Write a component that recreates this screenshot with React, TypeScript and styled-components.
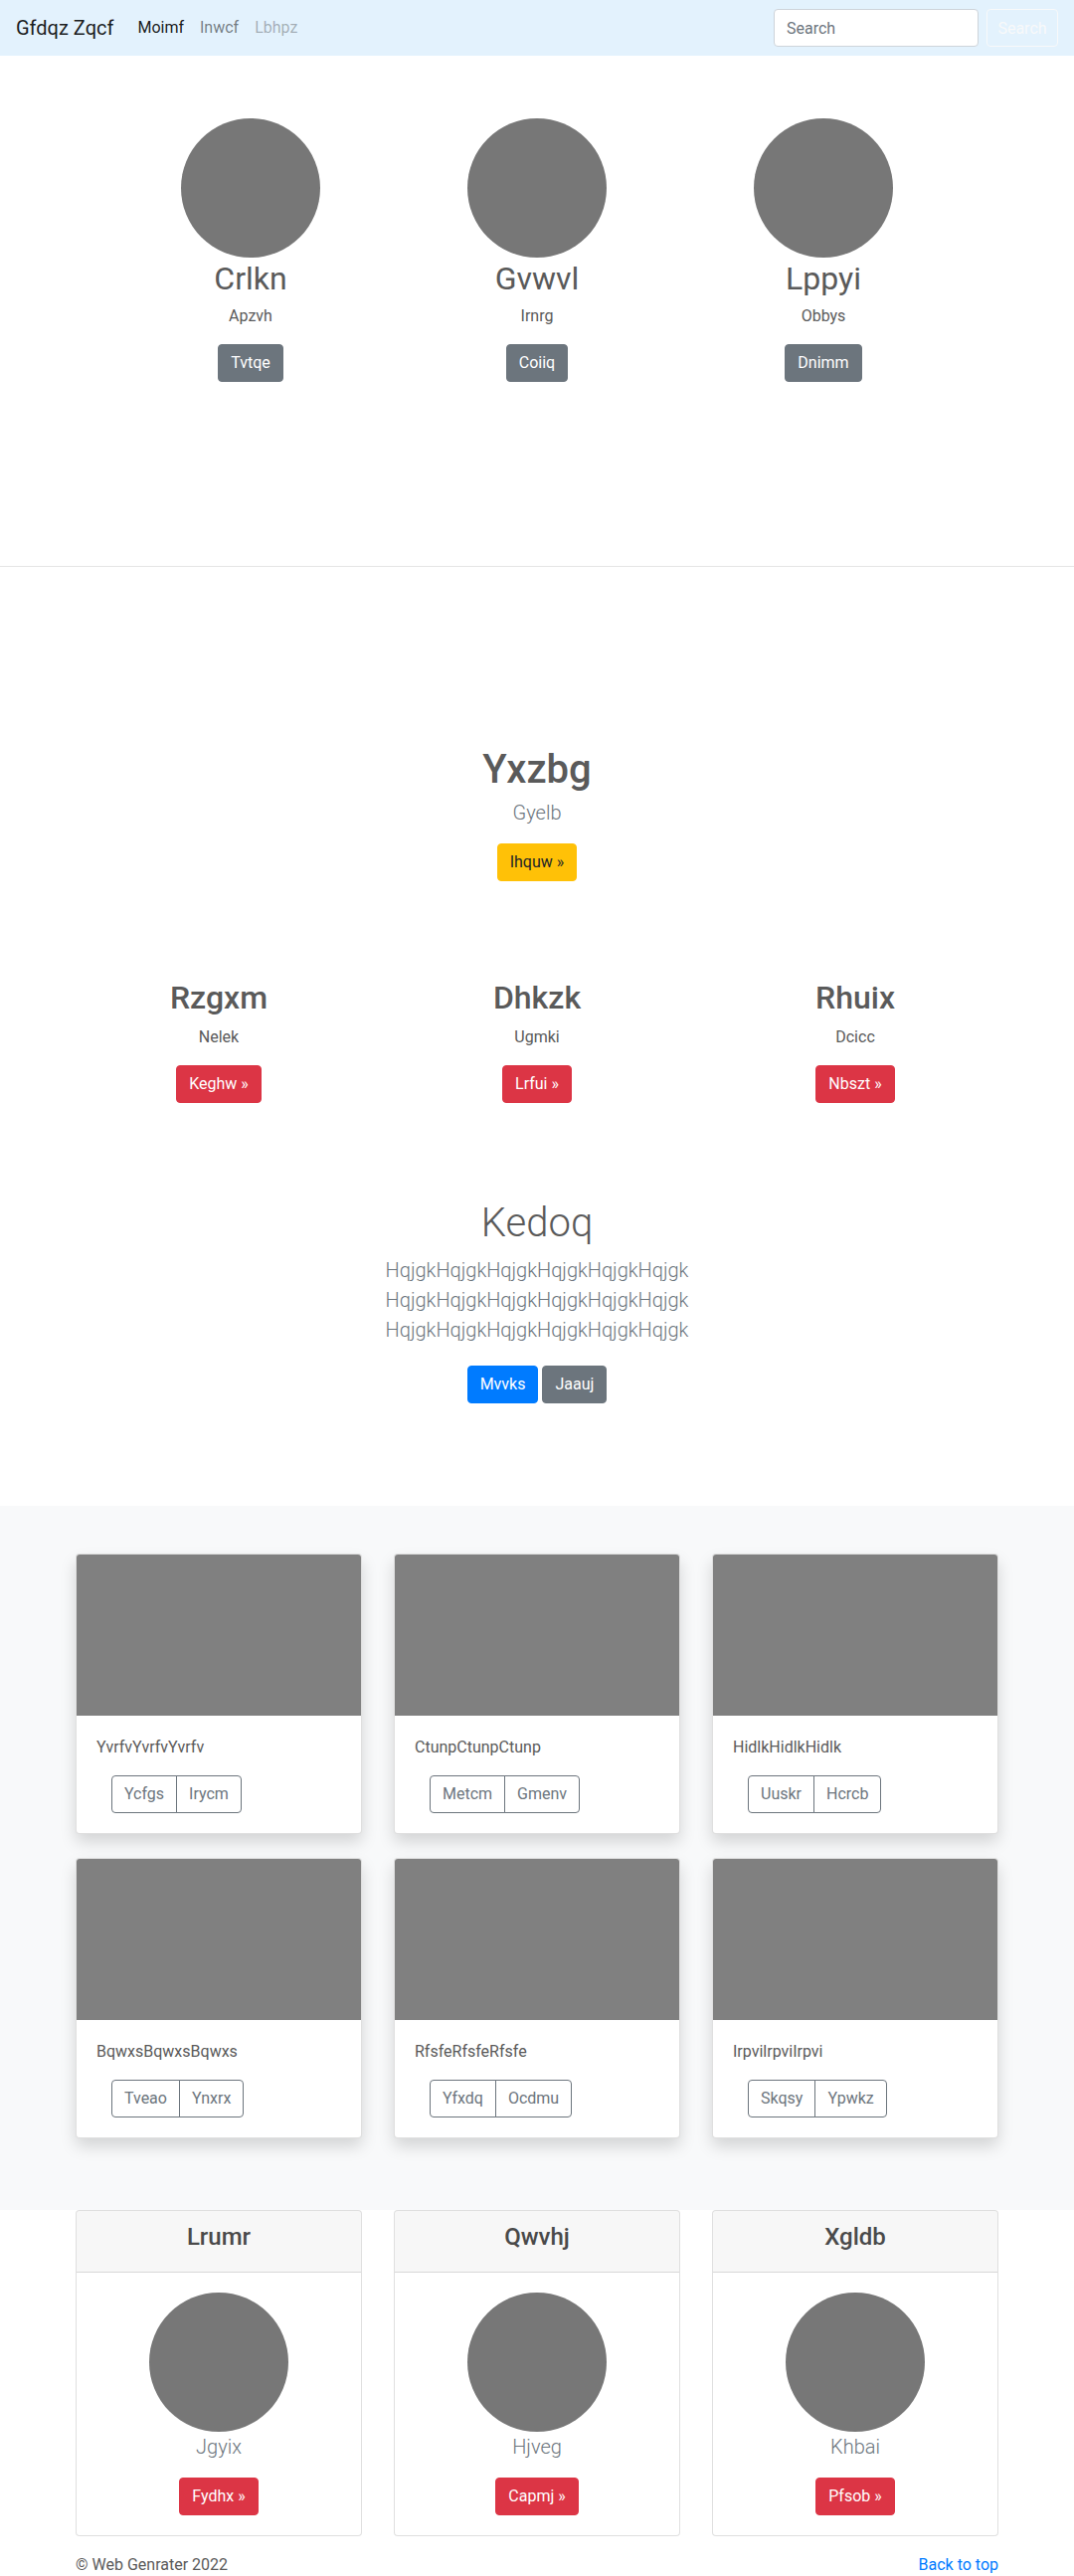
import React from 'react';
import styled, { createGlobalStyle, css } from 'styled-components';

const GlobalStyle = createGlobalStyle`
	* {
		box-sizing: border-box;
	}

	body {
		margin: 0;
		font-family: 'Segoe UI', Roboto, 'Liberation Sans', Arial, sans-serif;
		font-size: 16px;
		line-height: 1.5;
		color: #5a5a5a;
		background-color: #ffffff;
	}
`;

const NavBar = styled.nav`
	display: flex;
	align-items: center;
	height: 56px;
	padding: 8px 16px;
	background-color: #e3f2fd;
`;

const Brand = styled.a`
	font-size: 20px;
	line-height: 30px;
	color: rgba(0, 0, 0, 0.9);
	margin-right: 16px;
	text-decoration: none;
	white-space: nowrap;
`;

const NavList = styled.ul`
	display: flex;
	list-style: none;
	margin: 0;
	padding: 0;
`;

type LinkState = 'active' | 'normal' | 'disabled';

const linkColors: Record<LinkState, string> = {
	active: 'rgba(0, 0, 0, 0.9)',
	normal: 'rgba(0, 0, 0, 0.5)',
	disabled: 'rgba(0, 0, 0, 0.3)',
};

const NavLink = styled.a<{ $state: LinkState }>`
	display: block;
	padding: 8px;
	color: ${p => linkColors[p.$state]};
	text-decoration: none;
`;

const SearchForm = styled.form`
	display: flex;
	margin-left: auto;
	gap: 8px;
`;

const SearchInput = styled.input`
	width: 206px;
	height: 38px;
	padding: 6px 12px;
	font-family: inherit;
	font-size: 16px;
	color: #495057;
	background-color: #ffffff;
	border: 1px solid #ced4da;
	border-radius: 4px;
	outline: none;

	&::placeholder {
		color: #6c757d;
	}
`;

const SearchButton = styled.button`
	width: 72px;
	height: 38px;
	font-family: inherit;
	font-size: 16px;
	color: #f8f9fa;
	background: transparent;
	border: 1px solid #f8f9fa;
	border-radius: 4px;
`;

type Variant = 'primary' | 'secondary' | 'warning' | 'danger';

const variants: Record<Variant, { bg: string; fg: string }> = {
	primary: { bg: '#007bff', fg: '#ffffff' },
	secondary: { bg: '#6c757d', fg: '#ffffff' },
	warning: { bg: '#ffc107', fg: '#212529' },
	danger: { bg: '#dc3545', fg: '#ffffff' },
};

const Button = styled.a<{ $variant: Variant }>`
	display: inline-block;
	padding: 6px 12px;
	font-size: 16px;
	line-height: 24px;
	border-radius: 4px;
	text-decoration: none;
	border: 1px solid ${p => variants[p.$variant].bg};
	background-color: ${p => variants[p.$variant].bg};
	color: ${p => variants[p.$variant].fg};
`;

const Circle = styled.div`
	width: 140px;
	height: 140px;
	border-radius: 50%;
	background-color: #777777;
	margin: 0 auto;
`;

/* marketing row */

const Marketing = styled.section`
	padding: 63px 0 185px;
	border-bottom: 1px solid rgba(0, 0, 0, 0.1);
`;

const ThreeCols = styled.div<{ $width: number }>`
	display: grid;
	grid-template-columns: repeat(3, 1fr);
	width: ${p => p.$width}px;
	margin: 0 auto;
	text-align: center;
`;

const MarketName = styled.h2`
	font-size: 32px;
	font-weight: 400;
	line-height: 1.2;
	margin: 2px 0 7px;
`;

const Para = styled.p`
	margin: 0 0 16px;
`;

/* hero + featurettes */

const Hero = styled.section`
	padding: 180px 0 98px;
	text-align: center;
`;

const HeroTitle = styled.h1`
	font-size: 40px;
	font-weight: 500;
	line-height: 1.2;
	margin: 0 0 4px;
`;

const Lead = styled.p<{ $mb?: number }>`
	font-size: 20px;
	font-weight: 300;
	line-height: 30px;
	color: #6c757d;
	margin: 0 0 ${p => p.$mb ?? 16}px;
`;

const Features = styled.section`
	padding-bottom: 97px;
`;

const FeatureName = styled.h2`
	font-size: 32px;
	font-weight: 500;
	line-height: 1.2;
	margin: 0 0 8px;
`;

const Jumbo = styled.section`
	text-align: center;
	padding-bottom: 103px;
`;

const JumboTitle = styled.h1`
	font-size: 40px;
	font-weight: 300;
	line-height: 1.2;
	margin: 0 0 8px;
`;

const LeadLine = styled.span`
	display: block;
`;

const ButtonRow = styled.div`
	display: flex;
	justify-content: center;
	gap: 4px;
`;

/* album */

const Album = styled.section`
	background-color: #f8f9fa;
	padding: 48px 0 72px;
`;

const Container = styled.div`
	width: 960px;
	margin: 0 auto;
	padding: 0 16px;
`;

const CardGrid = styled.div`
	display: grid;
	grid-template-columns: repeat(3, 288px);
	column-gap: 32px;
	row-gap: 24px;
`;

const Card = styled.div<{ $shadow?: boolean }>`
	background-color: #ffffff;
	border: 1px solid rgba(0, 0, 0, 0.125);
	border-radius: 4px;
	overflow: hidden;
	${p => p.$shadow && css`
		box-shadow: 0 8px 16px rgba(0, 0, 0, 0.15);
	`}
`;

const CardImage = styled.div`
	height: 162px;
	background-color: #808080;
`;

const CardBody = styled.div<{ $center?: boolean }>`
	padding: 20px;
	text-align: ${p => (p.$center ? 'center' : 'left')};
`;

const BtnGroup = styled.div`
	display: inline-flex;
	margin-left: 15px;
`;

const OutlineBtn = styled.button`
	padding: 6px 12px;
	font-family: inherit;
	font-size: 16px;
	line-height: 24px;
	color: #6c757d;
	background: transparent;
	border: 1px solid #6c757d;

	&:first-child {
		border-radius: 4px 0 0 4px;
	}

	& + & {
		margin-left: -1px;
		border-radius: 0 4px 4px 0;
	}
`;

/* pricing-like cards */

const CardHeader = styled.div`
	padding: 12px 20px;
	background-color: rgba(0, 0, 0, 0.03);
	border-bottom: 1px solid rgba(0, 0, 0, 0.125);
	text-align: center;

	h4 {
		font-size: 24px;
		font-weight: 500;
		line-height: 1.2;
		margin: 0 0 8px;
		color: #4a4a4a;
	}
`;

const Footer = styled.footer`
	display: flex;
	justify-content: space-between;
	padding-top: 17px;

	p {
		margin: 0;
	}

	a {
		color: #007bff;
		text-decoration: none;
	}
`;

const people = [
	{ name: 'Crlkn', sub: 'Apzvh', btn: 'Tvtqe' },
	{ name: 'Gvwvl', sub: 'Irnrg', btn: 'Coiiq' },
	{ name: 'Lppyi', sub: 'Obbys', btn: 'Dnimm' },
];

const features = [
	{ name: 'Rzgxm', sub: 'Nelek', btn: 'Keghw' },
	{ name: 'Dhkzk', sub: 'Ugmki', btn: 'Lrfui' },
	{ name: 'Rhuix', sub: 'Dcicc', btn: 'Nbszt' },
];

const albumCards = [
	{ text: 'YvrfvYvrfvYvrfv', a: 'Ycfgs', b: 'Irycm' },
	{ text: 'CtunpCtunpCtunp', a: 'Metcm', b: 'Gmenv' },
	{ text: 'HidlkHidlkHidlk', a: 'Uuskr', b: 'Hcrcb' },
	{ text: 'BqwxsBqwxsBqwxs', a: 'Tveao', b: 'Ynxrx' },
	{ text: 'RfsfeRfsfeRfsfe', a: 'Yfxdq', b: 'Ocdmu' },
	{ text: 'IrpvilrpviIrpvi', a: 'Skqsy', b: 'Ypwkz' },
];

const plans = [
	{ title: 'Lrumr', sub: 'Jgyix', btn: 'Fydhx' },
	{ title: 'Qwvhj', sub: 'Hjveg', btn: 'Capmj' },
	{ title: 'Xgldb', sub: 'Khbai', btn: 'Pfsob' },
];

const hqjgk = 'Hqjgk'.repeat(6);

function App() {
	return (
		<>
			<GlobalStyle />
			<NavBar>
				<Brand href="#">Gfdqz Zqcf</Brand>
				<NavList>
					<li><NavLink $state="active" href="#">Moimf</NavLink></li>
					<li><NavLink $state="normal" href="#">Inwcf</NavLink></li>
					<li><NavLink $state="disabled" href="#">Lbhpz</NavLink></li>
				</NavList>
				<SearchForm onSubmit={e => e.preventDefault()}>
					<SearchInput placeholder="Search" />
					<SearchButton type="submit">Search</SearchButton>
				</SearchForm>
			</NavBar>

			<Marketing>
				<ThreeCols $width={864}>
					{people.map(p => (
						<div key={p.name}>
							<Circle />
							<MarketName>{p.name}</MarketName>
							<Para>{p.sub}</Para>
							<Button $variant="secondary" href="#">{p.btn}</Button>
						</div>
					))}
				</ThreeCols>
			</Marketing>

			<Hero>
				<HeroTitle>Yxzbg</HeroTitle>
				<Lead>Gyelb</Lead>
				<Button $variant="warning" href="#">Ihquw »</Button>
			</Hero>

			<Features>
				<ThreeCols $width={960}>
					{features.map(f => (
						<div key={f.name}>
							<FeatureName>{f.name}</FeatureName>
							<Para>{f.sub}</Para>
							<Button $variant="danger" href="#">{f.btn} »</Button>
						</div>
					))}
				</ThreeCols>
			</Features>

			<Jumbo>
				<JumboTitle>Kedoq</JumboTitle>
				<Lead $mb={21}>
					<LeadLine>{hqjgk}</LeadLine>
					<LeadLine>{hqjgk}</LeadLine>
					<LeadLine>{hqjgk}</LeadLine>
				</Lead>
				<ButtonRow>
					<Button $variant="primary" href="#">Mvvks</Button>
					<Button $variant="secondary" href="#">Jaauj</Button>
				</ButtonRow>
			</Jumbo>

			<Album>
				<Container>
					<CardGrid>
						{albumCards.map(c => (
							<Card $shadow key={c.text}>
								<CardImage />
								<CardBody>
									<Para>{c.text}</Para>
									<BtnGroup>
										<OutlineBtn>{c.a}</OutlineBtn>
										<OutlineBtn>{c.b}</OutlineBtn>
									</BtnGroup>
								</CardBody>
							</Card>
						))}
					</CardGrid>
				</Container>
			</Album>

			<Container>
				<CardGrid>
					{plans.map(p => (
						<Card key={p.title}>
							<CardHeader>
								<h4>{p.title}</h4>
							</CardHeader>
							<CardBody $center>
								<Circle />
								<Lead>{p.sub}</Lead>
								<Button $variant="danger" href="#">{p.btn} »</Button>
							</CardBody>
						</Card>
					))}
				</CardGrid>
				<Footer>
					<p>© Web Genrater 2022</p>
					<p><a href="#">Back to top</a></p>
				</Footer>
			</Container>
		</>
	);
}

export default App;
